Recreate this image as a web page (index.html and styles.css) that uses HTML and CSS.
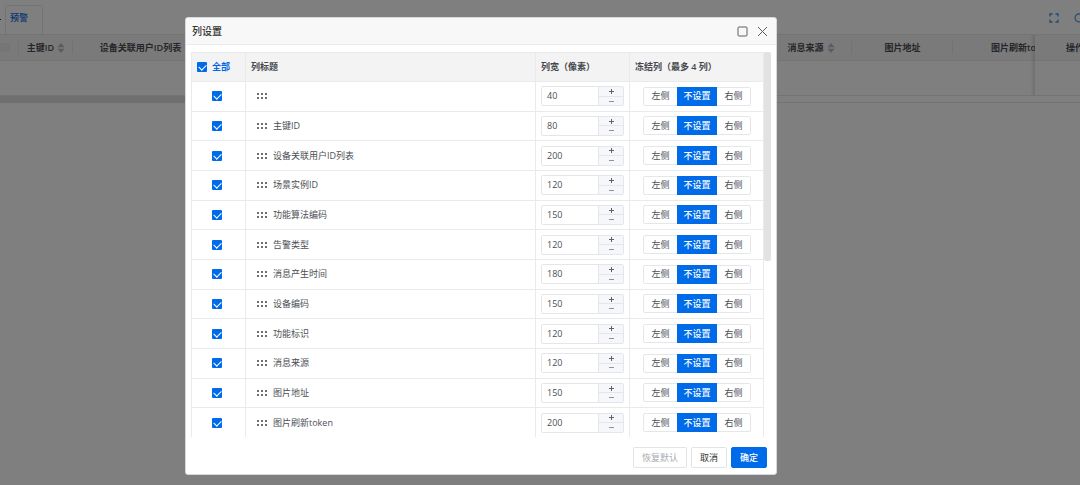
FILE: index.html
```
<!DOCTYPE html>
<html lang="zh-CN">
<head>
<meta charset="utf-8">
<title>列设置</title>
<link rel="stylesheet" href="styles.css">
</head>
<body>
<svg class="defs" aria-hidden="true">
  <symbol id="grip" viewBox="0 0 10 6"><path d="M0 0h2v2H0zM4 0h2v2H4zM8 0h2v2H8zM0 4h2v2H0zM4 4h2v2H4zM8 4h2v2H8z" fill="#6a6d73"/></symbol>
  <symbol id="sort" viewBox="0 0 8 10"><path d="M4 0l3.600 4.300H.4zM4 10L.4 5.700h7.200z" fill="#b4b8c0"/></symbol>
</svg>

<div class="page">
  <header class="toolbar">
    <span class="prev-tab"></span>
    <a class="tab" href="#">预警</a>
    <div class="tools">
      <button class="tool" type="button" aria-label="全屏"><svg width="10" height="10" viewBox="0 0 10 10"><path d="M1 3.500V1h2.500M6.500 1H9v2.500M9 6.500V9H6.500M3.500 9H1V6.500" fill="none" stroke="#4a8fe8" stroke-width="1.300"/></svg></button>
      <button class="tool" type="button" aria-label="刷新"><svg width="10" height="10" viewBox="0 0 10 10"><path d="M8.500 2.800A4 4 0 1 0 9 5.500M8.600.5v2.700H6" fill="none" stroke="#4a8fe8" stroke-width="1.100"/></svg></button>
    </div>
  </header>
  <div class="grid-head">
    <div class="gh gh-check"><span class="ghost-box"></span></div>
    <div class="gh gh-id">主键ID<svg class="sort"><use href="#sort"/></svg></div>
    <div class="gh gh-users">设备关联用户ID列表</div>
    <div class="gh gh-fill"></div>
    <div class="gh gh-source">消息来源<svg class="sort"><use href="#sort"/></svg></div>
    <div class="gh gh-image">图片地址</div>
    <div class="gh gh-token">图片刷新token</div>
    <div class="gh gh-action">操作</div>
  </div>
  <div class="grid-body"><div class="frozen"></div></div>
  <div class="grid-scroll"><div class="grid-thumb"></div></div>
</div>

<div class="mask"></div>

<section class="dialog" role="dialog" aria-labelledby="dlg-title">
  <header class="dialog-head">
    <h1 id="dlg-title">列设置</h1>
    <button class="icon-btn" type="button" aria-label="最大化"><svg width="11" height="11" viewBox="0 0 11 11"><rect x="1" y="1" width="9" height="9" rx="1" fill="none" stroke="#5b5e63"/></svg></button>
    <button class="icon-btn" type="button" aria-label="关闭"><svg width="11" height="11" viewBox="0 0 11 11"><path d="M1 1l9 9M10 1l-9 9" fill="none" stroke="#5b5e63"/></svg></button>
  </header>
  <div class="scroller">
    <table class="cols">
      <colgroup><col class="c-check"><col><col class="c-width"><col class="c-freeze"></colgroup>
      <thead>
        <tr>
          <th><label class="all"><input type="checkbox" class="check" checked>全部</label></th>
          <th>列标题</th>
          <th>列宽（像素）</th>
          <th>冻结列（最多 4 列）</th>
        </tr>
      </thead>
      <tbody id="rows"></tbody>
    </table>
    <div class="thumb"></div>
  </div>
  <footer class="dialog-foot">
    <button class="btn btn-muted" type="button">恢复默认</button>
    <button class="btn" type="button">取消</button>
    <button class="btn btn-primary" type="button">确定</button>
  </footer>
</section>
<script src="rows.js"></script>
</body>
</html>
```

FILE: styles.css
```
* { box-sizing: border-box; }
body {
  margin: 0;
  background: #fff;
  color: #4b4e54;
  font: 9px/14px "Open Sans", "Noto Sans CJK SC", sans-serif;
}
button, input { font: inherit; color: inherit; margin: 0; }
button { padding: 0; border: 0; background: none; }
.defs { display: none; }
svg { display: block; }

/* page behind the dialog */
.page { overflow: hidden; }
.toolbar { display: flex; height: 34px; padding-top: 5px; }
.prev-tab { width: 1px; height: 1px; margin: 14px 4px 0 0; background: #333; }
.tab {
  width: 38px;
  padding: 5px 0 0 4px;
  border: 1px solid #e4e7ed;
  border-bottom: 0;
  border-radius: 3px 3px 0 0;
  color: #0067e6;
  font-size: 9px;
  font-weight: 500;
  text-decoration: none;
}
.tools { display: flex; align-items: center; gap: 15px; margin: 0 -4px 3px auto; flex: none; }
.grid-head {
  display: flex;
  height: 27px;
  border: solid #e8e8e8;
  border-width: 1px 0;
  background: #f5f5f5;
  font-weight: 600;
}
.gh { position: relative; display: flex; flex: none; align-items: center; justify-content: center; gap: 3px; white-space: nowrap; }
.gh::after { content: ""; position: absolute; right: 0; top: 6px; bottom: 6px; width: 1px; background: #e6e6e6; }
.gh-check { width: 19px; justify-content: flex-start; }
.ghost-box { width: 10px; height: 9px; background: #ededed; }
.gh-id { width: 54px; }
.gh-users { width: 135px; }
.gh-fill { flex: 1; }
.gh-source { width: 82px; }
.gh-image { width: 101px; }
.gh-token { width: 82px; padding-left: 38px; justify-content: flex-start; overflow: hidden; }
.gh-action { width: 45px; padding-left: 31px; justify-content: flex-start; }
.gh-token::after, .gh-action::after { display: none; }
.sort { width: 8px; height: 10px; }
.grid-body { display: flex; justify-content: flex-end; height: 35px; border-bottom: 1px solid #e6e6e6; }
.frozen { position: relative; width: 45px; }
.frozen::before {
  content: "";
  position: absolute;
  top: -26px;
  bottom: 0;
  left: -5px;
  width: 5px;
  background: linear-gradient(to right, rgba(0, 0, 0, 0), rgba(0, 0, 0, .12));
}
.grid-scroll { height: 7px; border-bottom: 1px solid #e6e6e6; }
.grid-thumb { width: 60%; height: 7px; background: #dedede; }
.mask { position: fixed; inset: 0; background: rgba(0, 0, 0, .5); }

/* dialog */
.dialog {
  position: absolute;
  top: 17px;
  left: 185px;
  right: 303px;
  border: 1px solid #d5d8dc;
  border-radius: 3px;
  background: #fff;
  overflow: hidden;
}
.dialog-head {
  display: flex;
  align-items: center;
  gap: 9px;
  height: 27px;
  padding: 0 8px 0 6px;
  border-bottom: 1px solid #ebebeb;
  background: #f8f8f8;
}
.dialog-head h1 { flex: 1; margin: 0; font-size: 10px; font-weight: 500; color: #333; }
.scroller { position: relative; height: 385px; margin: 7px 5px 0; padding-right: 7px; overflow: hidden; }
.cols { width: 100%; height: 386px; border-collapse: separate; border-spacing: 0; border-left: 1px solid #e8eaec; table-layout: fixed; }
.c-check { width: 54px; }
.c-width { width: 94px; }
.c-freeze { width: 134px; }
.cols th, .cols td { padding: 0 5px; border: solid #e8eaec; border-width: 0 1px 1px 0; text-align: left; vertical-align: middle; }
.cols th { height: 30px; background: #f3f3f4; border-top-width: 1px; font-weight: 600; color: #45484d; white-space: nowrap; }
.cols td:first-child { padding: 0 4px 0 0; }
.all { display: flex; align-items: center; gap: 5px; color: #0067e6; }
.check {
  appearance: none;
  display: block;
  width: 10px;
  height: 10px;
  border-radius: 1px;
  background: #006be8;
}
.check:checked::after {
  content: "";
  display: block;
  width: 6px;
  height: 4px;
  margin: 2px 0 0 2px;
  border: solid #fff;
  border-width: 0 0 1px 1px;
  transform: rotate(-45deg);
}
td .check { margin: 0 auto; }
.name { display: flex; align-items: center; gap: 6px; padding-left: 6px; }
.grip { width: 10px; height: 6px; }
.num { display: flex; width: 83px; height: 20px; border: 1px solid #e4e6ea; border-radius: 2px; overflow: hidden; }
.num input { flex: 1; min-width: 0; padding: 0 5px; border: 0; outline: 0; background: #fff; }
.steps { display: flex; flex-direction: column; width: 25px; border-left: 1px solid #e4e6ea; background: #f5f7fa; }
.steps button { display: flex; flex: 1; align-items: center; justify-content: center; }
.steps button + button { border-top: 1px solid #e4e6ea; }
.seg { display: flex; width: 108px; height: 19px; margin-left: 8px; border: 1px solid #e4e6ea; border-radius: 2px; }
.seg button { width: 33px; }
.seg .on { width: 40px; margin: -1px 0; background: #006be8; color: #fff; font-weight: 500; }
.thumb { position: absolute; top: 0; right: 0; width: 7px; height: 209px; border-radius: 2px; background: #e1e2e4; }
.dialog-foot { display: flex; justify-content: flex-end; gap: 4px; padding: 10px 9px 6px; }
.btn { height: 21px; padding: 0 8px; border: 1px solid #e1e3e7; border-radius: 2px; background: #fff; color: #333; }
.btn-muted { color: #a8abb2; }
.btn-primary { border-color: #006be8; background: #006be8; color: #fff; font-weight: 500; }
```

FILE: rows.js
```
const columns = [
  ["", 40], ["主键ID", 80], ["设备关联用户ID列表", 200], ["场景实例ID", 120],
  ["功能算法编码", 150], ["告警类型", 120], ["消息产生时间", 180], ["设备编码", 150],
  ["功能标识", 120], ["消息来源", 120], ["图片地址", 150], ["图片刷新token", 200]
];
document.getElementById("rows").innerHTML = columns.map(([name, width]) => `
  <tr>
    <td><input type="checkbox" class="check" aria-label="显示${name}" checked></td>
    <td><div class="name"><svg class="grip"><use href="#grip"/></svg>${name}</div></td>
    <td><div class="num"><input type="text" aria-label="列宽${name}" value="${width}"><div class="steps">
      <button type="button" aria-label="增加"><svg width="5" height="5" viewBox="0 0 5 5"><path d="M0 2.5h5M2.5 0v5" stroke="#606266"/></svg></button>
      <button type="button" aria-label="减少"><svg width="5" height="5" viewBox="0 0 5 5"><path d="M0 2.5h5" stroke="#909399"/></svg></button>
    </div></div></td>
    <td><div class="seg"><button type="button">左侧</button><button type="button" class="on">不设置</button><button type="button">右侧</button></div></td>
  </tr>`).join("");
```
